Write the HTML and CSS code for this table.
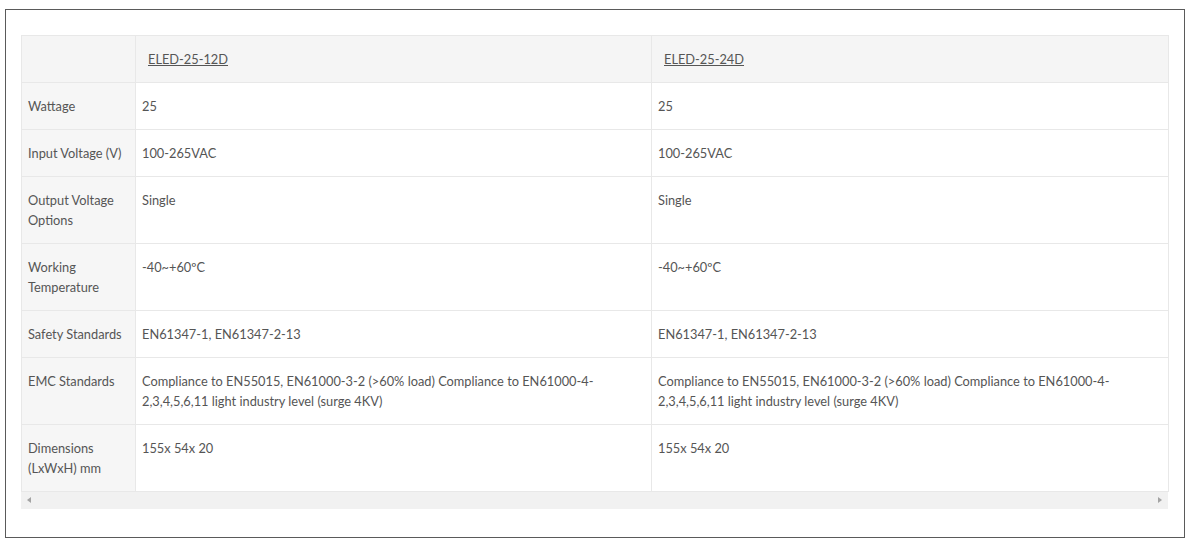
FILE: index.html
```html
<!DOCTYPE html>
<html>
<head>
<meta charset="utf-8">
<link rel="stylesheet" href="styles.css">
</head>
<body>
<div class="frame">
  <div class="table-wrap">
    <table class="spec">
      <colgroup>
        <col class="c-label">
        <col class="c-val">
        <col class="c-val2">
      </colgroup>
      <thead>
        <tr>
          <th class="label"></th>
          <th><a href="#">ELED-25-12D</a></th>
          <th><a href="#">ELED-25-24D</a></th>
        </tr>
      </thead>
      <tbody>
        <tr><td class="label">Wattage</td><td>25</td><td>25</td></tr>
        <tr><td class="label">Input Voltage (V)</td><td>100-265VAC</td><td>100-265VAC</td></tr>
        <tr><td class="label">Output Voltage Options</td><td>Single</td><td>Single</td></tr>
        <tr><td class="label">Working Temperature</td><td>-40~+60ºC</td><td>-40~+60ºC</td></tr>
        <tr><td class="label">Safety Standards</td><td>EN61347-1, EN61347-2-13</td><td>EN61347-1, EN61347-2-13</td></tr>
        <tr><td class="label">EMC Standards</td><td>Compliance to EN55015, EN61000-3-2 (&gt;60% load) Compliance to EN61000-4-2,3,4,5,6,11 light industry level (surge 4KV)</td><td>Compliance to EN55015, EN61000-3-2 (&gt;60% load) Compliance to EN61000-4-2,3,4,5,6,11 light industry level (surge 4KV)</td></tr>
        <tr><td class="label">Dimensions (LxWxH) mm</td><td>155x 54x 20</td><td>155x 54x 20</td></tr>
      </tbody>
    </table>
    <div class="hscroll">
      <span class="arrow left"></span>
      <span class="arrow right"></span>
    </div>
  </div>
</div>
</body>
</html>
```

FILE: styles.css
```css
html, body {
  margin: 0;
  padding: 0;
  background: #fff;
}
body {
  font-family: Lato, "Open Sans", sans-serif;
  font-size: 12.8px;
  color: #555;
}
.frame {
  margin: 9px 0 0 5px;
  width: 1180px;
  height: 529px;
  box-sizing: border-box;
  border: 1px solid #5a5a5a;
  padding: 25px 15px 0 15px;
}
.table-wrap {
  width: 1147px;
}
.spec {
  border-collapse: collapse;
  width: 1147px;
  table-layout: fixed;
}
.c-label { width: 114px; }
.c-val { width: 516px; }
.c-val2 { width: 517px; }
.spec th, .spec td {
  border: 1px solid #e8e8e8;
  padding: 13px 6px;
  line-height: 20px;
  text-align: left;
  vertical-align: top;
  font-weight: normal;
}
.spec thead th {
  background: #f5f5f5;
  padding-left: 12px;
}
.spec thead th.label {
  padding-left: 6px;
}
.spec a {
  color: #555;
  text-decoration: underline;
}
.spec td.label {
  background: #f6f6f6;
}
.hscroll {
  position: relative;
  height: 17px;
  background: #f1f1f1;
}
.arrow {
  position: absolute;
  top: 5px;
  width: 0;
  height: 0;
  border-top: 3.5px solid transparent;
  border-bottom: 3.5px solid transparent;
}
.arrow.left {
  left: 6px;
  border-right: 4px solid #a3a3a3;
}
.arrow.right {
  right: 6px;
  border-left: 4px solid #a3a3a3;
}
```
